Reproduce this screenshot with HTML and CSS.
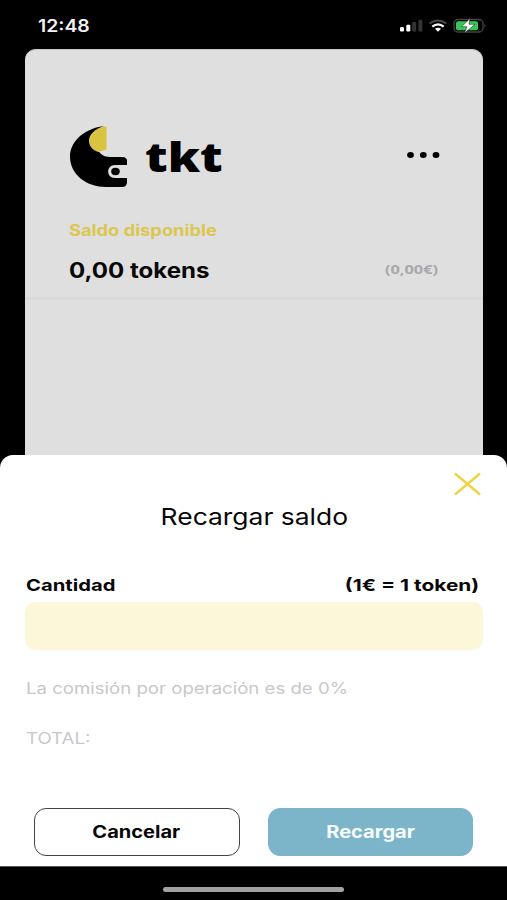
FILE: index.html
```html
<!DOCTYPE html>
<html lang="es">
<head>
<meta charset="utf-8">
<meta name="viewport" content="width=device-width, initial-scale=1">
<title>tkt</title>
<link rel="stylesheet" href="styles.css">
</head>
<body>
<div class="phone">
  <header class="status">
    <span class="wide time">12:48</span>
    <svg class="status-icons" width="88" height="18" viewBox="0 0 88 18">
      <rect x="1" y="11" width="4" height="4.500" rx="1.300" fill="#fff"/>
      <rect x="7.300" y="8.800" width="4" height="6.700" rx="1.200" fill="#fff"/>
      <rect x="13.200" y="6" width="4" height="9.500" rx="1.200" fill="#333"/>
      <rect x="19.400" y="3.800" width="4" height="11.700" rx="1.200" fill="#333"/>
      <path d="M30.500 7.500Q39 1.500 47.500 7.500" fill="none" stroke="#4a4a4a" stroke-width="1.800"/>
      <path d="M33.300 10.700Q39 6 44.700 10.700" fill="none" stroke="#fff" stroke-width="2.300"/>
      <path d="M36 12.800Q39 10.600 42 12.800L39 15.800Z" fill="#fff"/>
      <rect x="55" y="3.500" width="29" height="12.500" rx="4" fill="none" stroke="#454545" stroke-width="1.300"/>
      <rect x="57" y="5.300" width="22" height="9" rx="2" fill="#37c759"/>
      <path d="M85.500 7.700Q87.500 9.500 85.500 11.500Z" fill="#555"/>
      <path d="M71 2.500L62.500 10.700H68L65.500 17L76 8.300H70Z" fill="#fff" stroke="#111" stroke-width=".5"/>
    </svg>
  </header>

  <main class="card">
    <section class="balance">
      <div class="brand">
        <svg width="58" height="61" viewBox="0 0 58 61">
          <path d="M34 0C12 3 0 17 0 30.500C0 49 17 61 36 61H52Q57 61 57 56V52H45C36 52 36 39 45 39H57V35Q57 31 52 31H40C34 31 31 28 28 25L25 5Q29 1.500 34 0Z" fill="#000"/>
          <path d="M36.500 0.500V23.500L28 26C16 22 14 6 34 0.500Z" fill="#dbc342"/>
          <ellipse cx="45.500" cy="45.500" rx="4.300" ry="3.700" fill="#000"/>
        </svg>
        <span class="wide logo">tkt</span>
        <svg class="more" width="34" height="8" viewBox="0 0 34 8">
          <ellipse cx="4.500" cy="4" rx="3.400" ry="2.900"/><ellipse cx="17.300" cy="4" rx="3.400" ry="2.900"/><ellipse cx="30" cy="4" rx="3.400" ry="2.900"/>
        </svg>
      </div>
      <p class="label"><span class="wide label-text">Saldo disponible</span></p>
      <div class="amount"><span class="wide tokens">0,00 tokens</span><span class="wide euros">(0,00€)</span></div>
    </section>
  </main>

  <section class="sheet">
    <div class="close-row">
      <svg width="28" height="24" viewBox="0 0 28 24"><path d="M1 1.500L26 22.500M26 1.500L1 22.500" fill="none" stroke="#f0d341" stroke-width="2.300"/></svg>
    </div>
    <h1><span class="wide title">Recargar saldo</span></h1>
    <div class="field-head"><span class="wide qty">Cantidad</span><span class="wide rate">(1€ = 1 token)</span></div>
    <div class="field"></div>
    <p class="note"><span class="wide fee">La comisión por operación es de 0%</span></p>
    <p class="note total-row"><span class="wide total">TOTAL:</span></p>
    <div class="actions">
      <button class="btn"><span class="wide cancel">Cancelar</span></button>
      <button class="btn primary"><span class="wide reload">Recargar</span></button>
    </div>
  </section>
  <footer class="home"><div class="bar"></div></footer>
</div>
</body>
</html>
```
FILE: styles.css
```css
* { box-sizing: border-box; }
body { margin: 0; background: #000; }
.phone {
  width: 507px; height: 900px; display: flex; flex-direction: column;
  background: #000; color: #080808; overflow: hidden;
  font-family: Inter, "Liberation Sans", sans-serif;
}
p, h1 { margin: 0; font-weight: 400; }
.wide { display: inline-block; white-space: nowrap; transform-origin: left center; transform: scaleX(1.2); }

.status { height: 49px; padding: 16px 20px 0 38px; display: flex; justify-content: space-between; align-items: flex-start; }
.time { color: #f2f2f2; font-size: 17px; line-height: 20px; font-weight: 600; transform: scaleX(1.14); }

.card { height: 406px; margin: 0 24px 0 25px; background: #dfdfdf; border-radius: 11px 11px 0 0; border-top: 1px solid #c8c8c8; }
.balance { height: 250px; padding: 75px 43px 0 44px; border-bottom: 3px solid #dadada; }
.brand { height: 64px; display: flex; align-items: flex-start; padding-left: 1px; padding-top: 1px; }
.logo { margin: 4px 0 0 17px; font: 800 41px/52px "Open Sans", sans-serif; color: #000; }
.more { margin: 25px 0 0 auto; }
.label { margin-top: 31px; height: 20px; }
.label-text { color: #dbc650; font-size: 15.500px; line-height: 20px; font-weight: 700; transform: scaleX(1.18); }
.amount { margin-top: 18px; display: flex; justify-content: space-between; align-items: center; }
.tokens { font-size: 21px; line-height: 26px; font-weight: 700; transform: scaleX(1.145); }
.euros { color: #a9a9ac; font: 700 12px/20px "Open Sans", sans-serif; transform-origin: right center; transform: translate(-2px, -1px) scaleX(1.36); }

.sheet { height: 411px; padding: 17px 24px 0 25px; background: #fff; border-radius: 13px 13px 0 0; }
.close-row { height: 24px; display: flex; justify-content: flex-end; padding-right: 1px; }
h1 { height: 32px; margin-top: 5px; line-height: 32px; text-align: center; font-size: 23.500px; }
.title { line-height: 32px; transform-origin: center; transform: scaleX(1.125); }
.field-head { display: flex; justify-content: space-between; margin-top: 41px; padding: 0 4px 0 1px; font-size: 16.500px; line-height: 22px; font-weight: 700; }
.qty { transform: scaleX(1.225); }
.rate { transform-origin: right center; transform: scaleX(1.265); }
.field { height: 48px; margin-top: 6px; background: #fdf7da; border-radius: 10px; }
.note { height: 20px; margin-top: 29px; padding-left: 1px; color: #c7c7ca; font-size: 15.500px; line-height: 20px; }
.total-row { margin-top: 30px; }
.actions { display: flex; gap: 28px; margin-top: 59px; padding: 0 10px 0 9px; }
.btn { flex: 1; height: 48px; padding: 0; border: 1.500px solid #444; border-radius: 12px; background: #fff; color: #080808; font: 700 17px/20px Inter, sans-serif; }
.btn .wide { transform-origin: center; transform: scaleX(1.18); }
.primary { background: #7cb5ca; border-color: #7cb5ca; color: #f8fdff; }
.home { height: 34px; padding-top: 20px; display: flex; justify-content: center; border-top: 1px solid #555; }
.bar { width: 181px; height: 5px; border-radius: 3px; background: #a2a2a2; }
```
